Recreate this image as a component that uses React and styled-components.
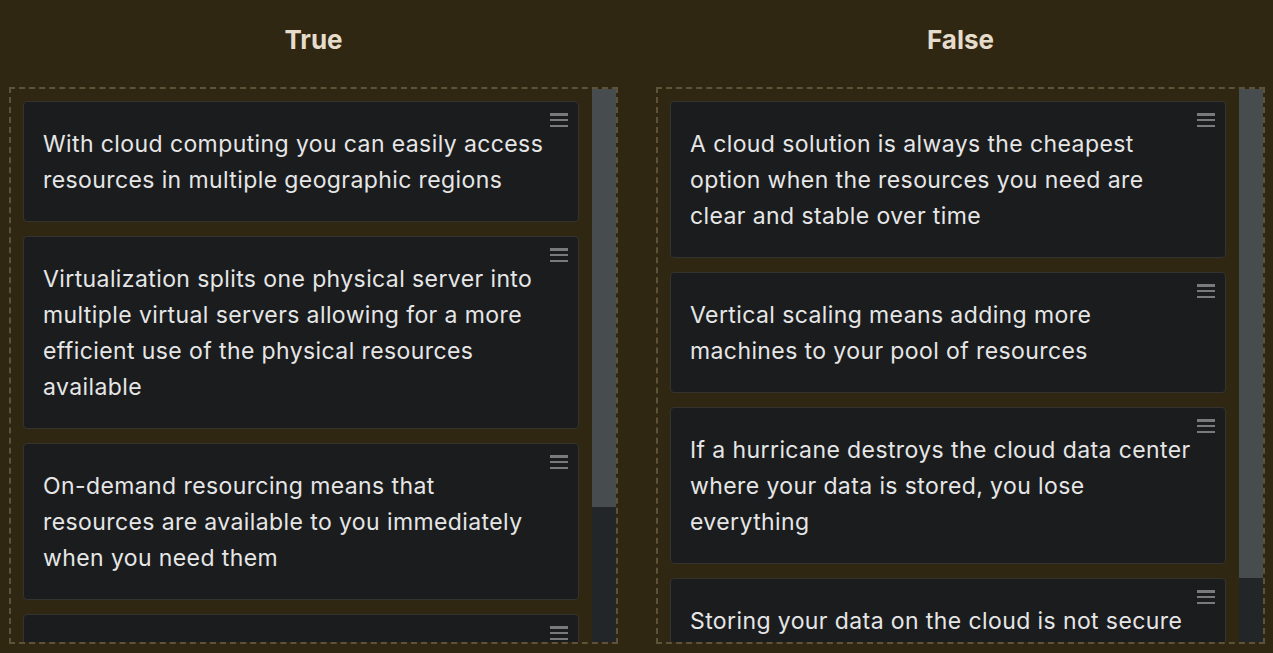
import React from 'react'
import styled, { createGlobalStyle } from 'styled-components'

const GlobalStyle = createGlobalStyle`
  html, body {
    margin: 0;
    padding: 0;
    background: #302712;
    height: 100%;
    overflow: hidden;
  }
  body {
    font-family: Inter, "Open Sans", "Liberation Sans", sans-serif;
  }
`

const Board = styled.div`
  display: grid;
  grid-template-columns: 1fr 1fr;
  column-gap: 38px;
  padding: 0 8px 0 9px;
  height: 653px;
  box-sizing: border-box;
`

const Column = styled.section`
  display: flex;
  flex-direction: column;
  min-height: 0;
`

const ColumnTitle = styled.h2`
  margin: 0;
  height: 87px;
  display: flex;
  align-items: center;
  justify-content: center;
  padding-bottom: 8px;
  box-sizing: border-box;
  font-size: 26px;
  font-weight: 700;
  color: #e6dccb;
`

const Dropzone = styled.div`
  height: 557px;
  box-sizing: border-box;
  border: 2px dashed #5e5238;
  display: flex;
  overflow: hidden;
`

const List = styled.div`
  flex: 1;
  min-width: 0;
  padding: 12px 13px 0 12px;
  display: flex;
  flex-direction: column;
  gap: 14px;
  overflow: hidden;
`

const ScrollTrack = styled.div`
  flex: none;
  width: 24px;
  background: #232629;
  display: flex;
  flex-direction: column;
`

const ScrollThumb = styled.div`
  flex: none;
  background: #474c4f;
`

const Card = styled.div`
  position: relative;
  flex: none;
  background: #1b1c1e;
  border: 1px solid #34332f;
  border-radius: 4px;
  padding: 24px 20px 23px 19px;
  font-size: 23px;
  line-height: 36px;
  letter-spacing: 0.4px;
  color: #e6e6e6;
`

const Line = styled.span`
  display: block;
  white-space: nowrap;
`

const Handle = styled.span`
  position: absolute;
  top: 11px;
  right: 10px;
  width: 18px;
  height: 14px;
  display: flex;
  flex-direction: column;
  justify-content: space-between;

  & > i {
    display: block;
    height: 2.5px;
    background: #7a7a7a;
  }
`

const columns = [
  {
    title: 'True',
    thumb: 418,
    cards: [
      ['With cloud computing you can easily access', 'resources in multiple geographic regions'],
      [
        'Virtualization splits one physical server into',
        'multiple virtual servers allowing for a more',
        'efficient use of the physical resources',
        'available'
      ],
      [
        'On-demand resourcing means that',
        'resources are available to you immediately',
        'when you need them'
      ],
      ['Cloud providers let you pay only for the', 'resources that you actually use']
    ]
  },
  {
    title: 'False',
    thumb: 489,
    cards: [
      [
        'A cloud solution is always the cheapest',
        'option when the resources you need are',
        'clear and stable over time'
      ],
      ['Vertical scaling means adding more', 'machines to your pool of resources'],
      [
        'If a hurricane destroys the cloud data center',
        'where your data is stored, you lose',
        'everything'
      ],
      ['Storing your data on the cloud is not secure']
    ]
  }
]

const App = () => (
  <>
    <GlobalStyle />
    <Board>
      {columns.map(col => (
        <Column key={col.title}>
          <ColumnTitle>{col.title}</ColumnTitle>
          <Dropzone>
            <List>
              {col.cards.map(lines => (
                <Card key={lines[0]}>
                  <Handle><i /><i /><i /></Handle>
                  {lines.map(l => <Line key={l}>{l}</Line>)}
                </Card>
              ))}
            </List>
            <ScrollTrack>
              <ScrollThumb style={{ height: col.thumb }} />
            </ScrollTrack>
          </Dropzone>
        </Column>
      ))}
    </Board>
  </>
)

export default App
